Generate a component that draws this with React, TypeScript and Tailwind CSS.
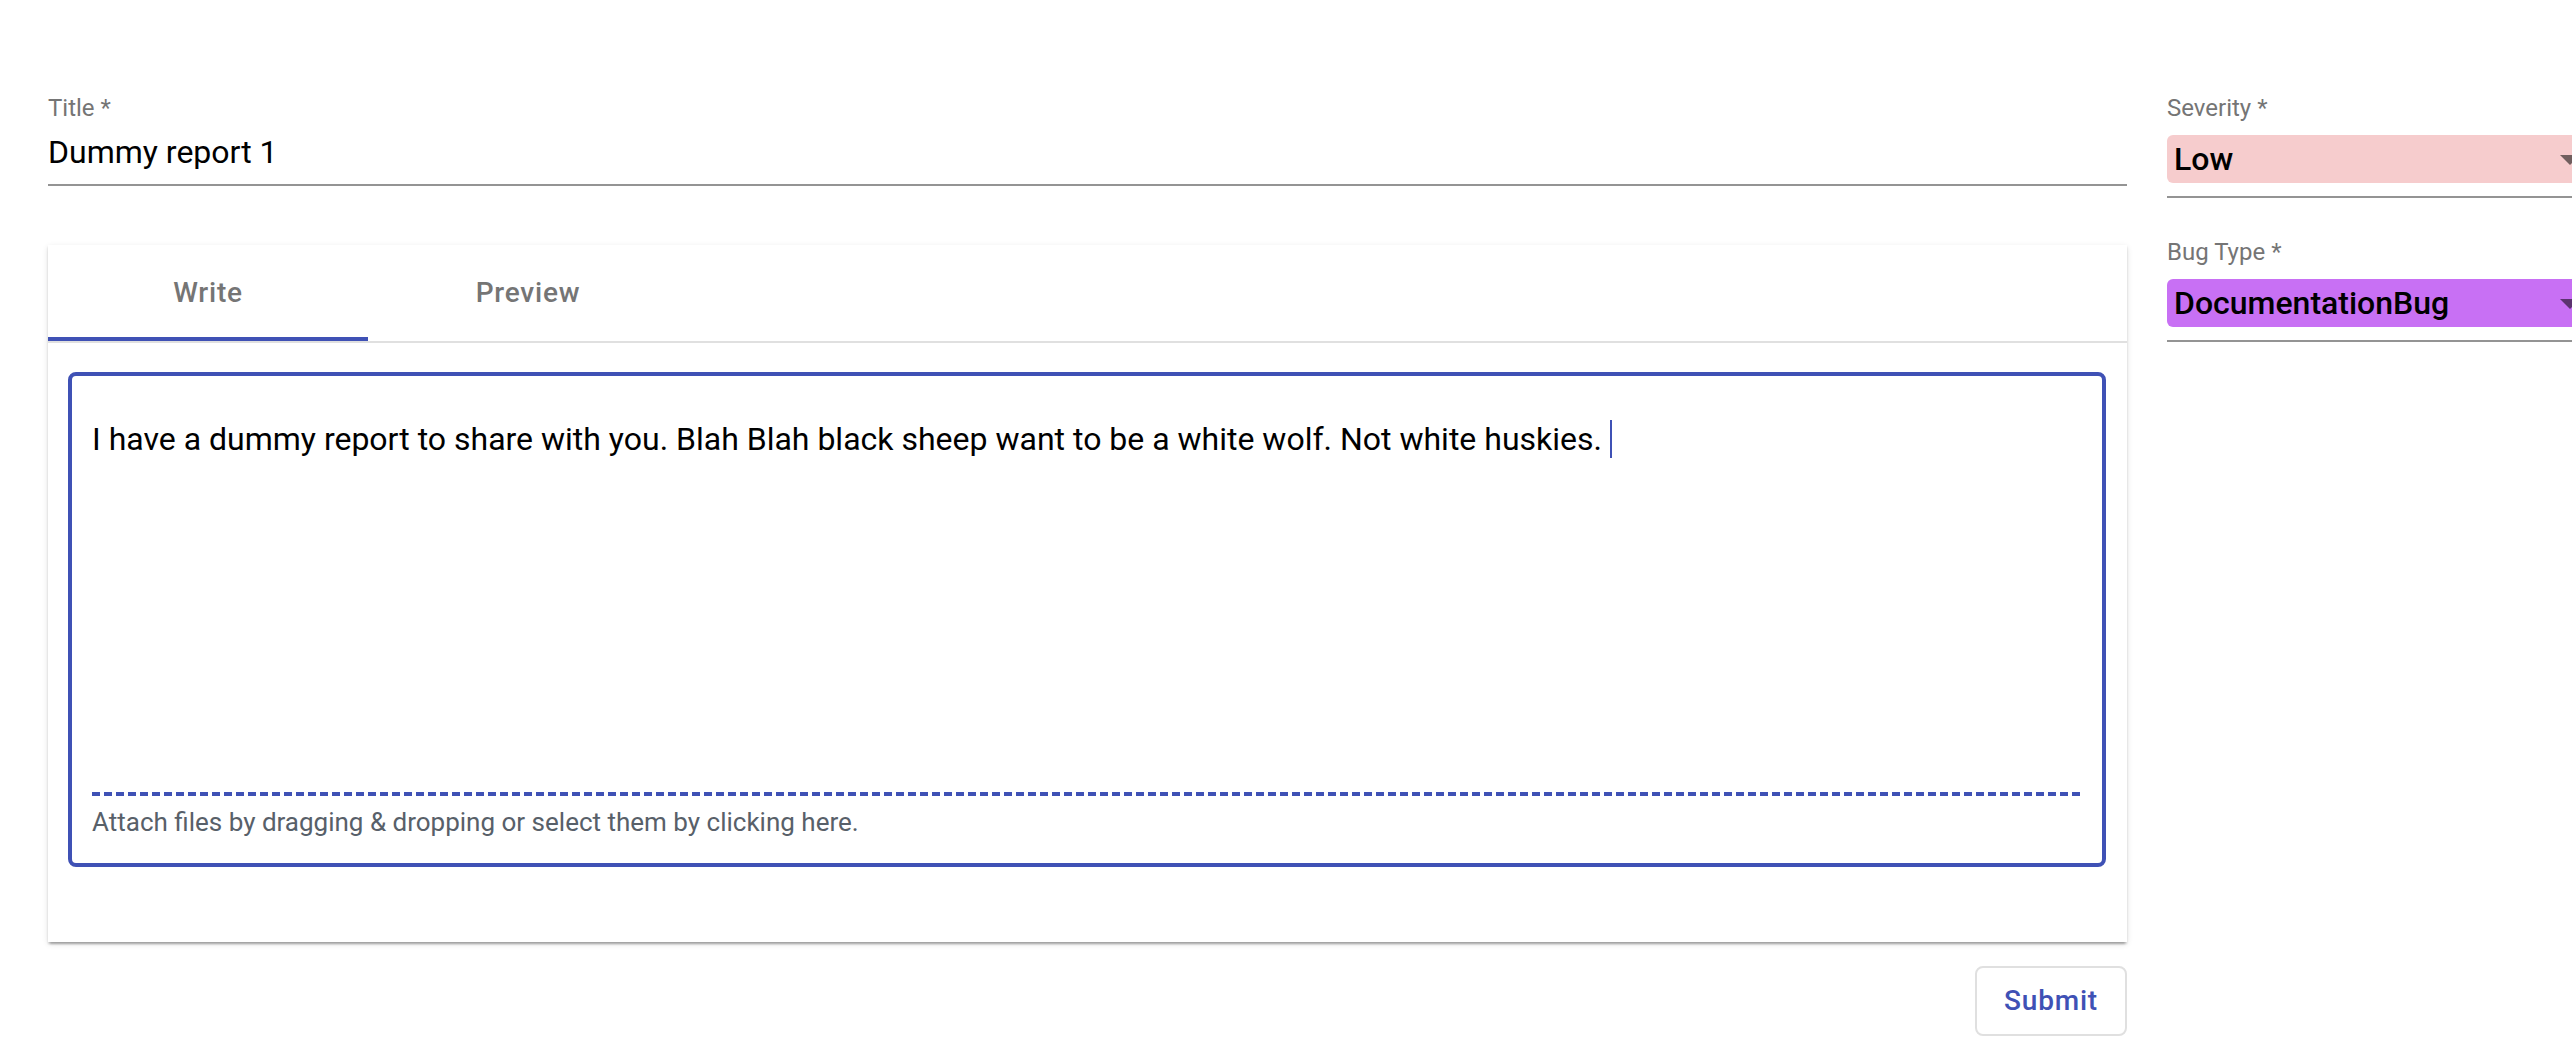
const font = "font-['Roboto','Liberation_Sans',sans-serif]";

const SelectField = ({ label, value, bg, className }: { label: string; value: string; bg: string; className?: string }) => {
  return (
    <div className={className}>
      <div className="text-[24px] leading-[24px] text-[#757575]">{label}</div>
      <div className="mt-[15px] border-b-2 border-[#949494] pb-[13px]">
        <div className={`flex h-[48px] items-center justify-between rounded-[6px] pl-[7px] ${bg}`}>
          <span className="text-[32px] leading-[38px] font-medium text-black">{value}</span>
          <svg width="48" height="48" viewBox="0 0 24 24" className="flex-none">
            <path d="M7 10l5 5 5-5z" fill="rgba(0,0,0,0.54)" />
          </svg>
        </div>
      </div>
    </div>
  );
};

const App = () => {
  return (
    <div className={`${font} w-[2572px] h-[1060px] overflow-hidden bg-white flex pl-[48px] pt-[96px]`}>
      {/* left column */}
      <div className="w-[2079px] flex-none flex flex-col">
        <div className="border-b-2 border-[#949494] pb-[13px]">
          <div className="text-[24px] leading-[24px] text-[#757575]">Title *</div>
          <div className="mt-[13px] text-[32px] leading-[38px] text-black">Dummy report 1</div>
        </div>

        <div className="mt-[59px] bg-white shadow-[0_4px_2px_-2px_rgba(0,0,0,0.2),0_2px_2px_0_rgba(0,0,0,0.14),0_2px_6px_0_rgba(0,0,0,0.12)]">
          <div className="flex border-b-2 border-[#e0e0e0]">
            <div className="w-[320px] h-[96px] flex flex-col">
              <div className="flex-1 flex items-center justify-center pt-[4px] text-[28px] font-medium tracking-[0.8px] text-[#757575]">Write</div>
              <div className="h-[4px] bg-[#3f51b5]" />
            </div>
            <div className="w-[320px] h-[96px] flex items-center justify-center text-[28px] font-medium tracking-[0.8px] text-[#757575]">Preview</div>
          </div>

          <div className="pl-[20px] pr-[21px] pt-[29px] pb-[75px]">
            <div className="h-[495px] border-4 border-[#3f51b5] rounded-[8px] px-[20px] pt-[44px] pb-[28px] flex flex-col">
              <div className="text-[32px] leading-[38px] text-black flex items-center">
                <span>I have a dummy report to share with you. Blah Blah black sheep want to be a white wolf. Not white huskies.</span>
                <span className="ml-[8px] inline-block w-[2px] h-[38px] bg-[#3f51b5]" />
              </div>
              <div className="flex-1" />
              <div className="h-[4px] bg-[repeating-linear-gradient(to_right,#3f51b5_0_8px,transparent_8px_12px)]" />
              <div className="mt-[13px] text-[26px] leading-[26px] text-[#586069]">
                Attach files by dragging &amp; dropping or select them by clicking here.
              </div>
            </div>
          </div>
        </div>

        <div className="mt-[24px] flex justify-end">
          <button className="w-[152px] h-[70px] border-2 border-[#e0e0e0] rounded-[8px] text-[28px] font-medium tracking-[0.8px] text-[#3f51b5] bg-white">
            Submit
          </button>
        </div>
      </div>

      {/* right column */}
      <div className="ml-[40px] w-[427px] flex-none">
        <SelectField label="Severity *" value="Low" bg="bg-[#f6cccd]" />
        <SelectField label="Bug Type *" value="DocumentationBug" bg="bg-[#c870f4]" className="mt-[42px]" />
      </div>
    </div>
  );
};

export default App;
